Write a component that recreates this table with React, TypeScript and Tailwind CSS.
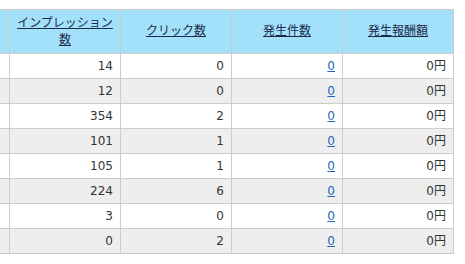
import React from "react";

const rows = [
  { imp: 14, click: 0, count: 0, reward: "0円" },
  { imp: 12, click: 0, count: 0, reward: "0円" },
  { imp: 354, click: 2, count: 0, reward: "0円" },
  { imp: 101, click: 1, count: 0, reward: "0円" },
  { imp: 105, click: 1, count: 0, reward: "0円" },
  { imp: 224, click: 6, count: 0, reward: "0円" },
  { imp: 3, click: 0, count: 0, reward: "0円" },
  { imp: 0, click: 2, count: 0, reward: "0円" },
];

const headers = ["インプレッション数", "クリック数", "発生件数", "発生報酬額"];

export default function App() {
  return (
    <div
      className="w-[465px] h-[264px] overflow-hidden bg-white pt-[9px]"
      style={{ fontFamily: '"DejaVu Sans", "Noto Sans CJK JP", sans-serif' }}
    >
      <table className="border-collapse table-fixed ml-[-91px] text-[12px] text-[#333]">
        <colgroup>
          <col className="w-[100px]" />
          <col className="w-[111px]" />
          <col className="w-[111px]" />
          <col className="w-[111px]" />
          <col className="w-[111px]" />
        </colgroup>
        <thead>
          <tr className="bg-[#a3e1fb] h-[44px]">
            <th className="border border-[#ccc]" />
            {headers.map((h) => (
              <th
                key={h}
                className="border border-[#ccc] px-[5px] font-normal text-center leading-[17px]"
              >
                <a href="#" className="underline text-[#1b2b4b]">
                  {h}
                </a>
              </th>
            ))}
          </tr>
        </thead>
        <tbody>
          {rows.map((r, i) => (
            <tr
              key={i}
              className={`h-[25px] ${i % 2 === 1 ? "bg-[#eeeeee]" : "bg-white"}`}
            >
              <td className="border border-[#ccc]" />
              <td className="border border-[#ccc] text-right pr-[7px] py-0">{r.imp}</td>
              <td className="border border-[#ccc] text-right pr-[7px] py-0">{r.click}</td>
              <td className="border border-[#ccc] text-right pr-[7px] py-0">
                <a href="#" className="underline text-[#2266bb]">
                  {r.count}
                </a>
              </td>
              <td className="border border-[#ccc] text-right pr-[7px] py-0">{r.reward}</td>
            </tr>
          ))}
        </tbody>
      </table>
    </div>
  );
}
